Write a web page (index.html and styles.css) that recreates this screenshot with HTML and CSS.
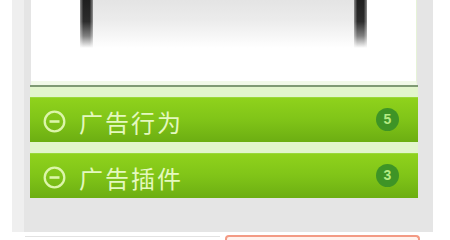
FILE: index.html
```html
<!DOCTYPE html>
<html lang="zh-CN">
<head>
<meta charset="utf-8">
<link rel="stylesheet" href="styles.css">
</head>
<body>
  <div class="panel">
    <div class="card">
      <div class="shot">
        <span class="pole"></span>
        <span class="glow"></span>
        <span class="pole"></span>
      </div>
    </div>
    <div class="rule"></div>
    <div class="list">
      <div class="item">
        <svg class="icon" width="23" height="23" viewBox="0 0 23 23"><circle cx="11.5" cy="11.5" r="9.8" fill="none" stroke="#dcf5aa" stroke-width="2.3"/><line x1="6.5" y1="11.5" x2="16.5" y2="11.5" stroke="#dcf5aa" stroke-width="2.6"/></svg>
        <span class="label">广告行为</span>
        <span class="badge">5</span>
      </div>
      <div class="item">
        <svg class="icon" width="23" height="23" viewBox="0 0 23 23"><circle cx="11.5" cy="11.5" r="9.8" fill="none" stroke="#dcf5aa" stroke-width="2.3"/><line x1="6.5" y1="11.5" x2="16.5" y2="11.5" stroke="#dcf5aa" stroke-width="2.6"/></svg>
        <span class="label">广告插件</span>
        <span class="badge">3</span>
      </div>
    </div>
  </div>
  <div class="footer">
    <div class="fbox"></div>
    <div class="fbtn"></div>
  </div>
</body>
</html>
```

FILE: styles.css
```css
* { box-sizing: border-box; }
html, body { margin: 0; padding: 0; }
body {
  background: #ffffff;
  width: 450px;
  height: 240px;
  overflow: hidden;
  font-family: "Noto Sans CJK SC", "Noto Sans", sans-serif;
}
.panel {
  margin-left: 12px;
  width: 421px;
  height: 232px;
  background: #e5e5e5;
  border-left: 12px solid #efefef;
  padding: 0 15px 0 6px;
}
.card {
  margin: 0 1px;
  height: 85px;
  background: #ffffff;
  border-bottom: 4px solid #f1f9e8;
  border-right: 1px solid #e6f3d8;
}
.shot {
  display: flex;
  margin-left: 49px;
  width: 287px;
  height: 48px;
}
.pole {
  width: 13px;
  background:
    linear-gradient(to right, rgba(255,255,255,0.5) 0, rgba(255,255,255,0) 25%, rgba(255,255,255,0) 75%, rgba(255,255,255,0.5) 100%),
    linear-gradient(to bottom, #1f1f1f 0, #2c2c2c 45%, #808080 75%, rgba(255,255,255,0) 100%);
}
.glow {
  flex: 1;
  background: linear-gradient(to bottom, #e4e4e4 0, #ebebeb 40%, #ffffff 100%);
}
.rule {
  height: 2px;
  background: #7f9a74;
}
.list {
  background: #e2f5cc;
  padding-top: 10px;
  display: flex;
  flex-direction: column;
  gap: 11px;
}
.item {
  height: 45px;
  display: flex;
  align-items: center;
  padding: 0 19px 0 13px;
  background: linear-gradient(to bottom, #8fd21c 0, #80c418 50%, #6cae12 100%);
  border-top: 1px solid #9ad93a;
}
.icon { flex: none; margin-top: 3px; }
.label {
  margin-left: 13px;
  flex: 1;
  color: #e4f8bf;
  font-size: 24px;
  letter-spacing: 2px;
  line-height: 1;
  margin-top: 3px;
}
.badge {
  width: 23px;
  height: 23px;
  border-radius: 50%;
  background: #3e9426;
  color: #b5ea82;
  font-family: "Liberation Sans", Arial, sans-serif;
  font-weight: bold;
  font-size: 14px;
  display: flex;
  align-items: center;
  justify-content: center;
  margin-top: -2px;
}
.footer {
  display: flex;
  gap: 5px;
  padding-left: 25px;
  margin-top: 3px;
}
.fbox {
  width: 195px;
  height: 8px;
  border-top: 1px solid #e2e2e2;
  margin-top: 1px;
}
.fbtn {
  width: 195px;
  height: 8px;
  border: 2px solid #f39a84;
  border-bottom: none;
  border-radius: 4px 4px 0 0;
  background: #fff1ec;
}
```
